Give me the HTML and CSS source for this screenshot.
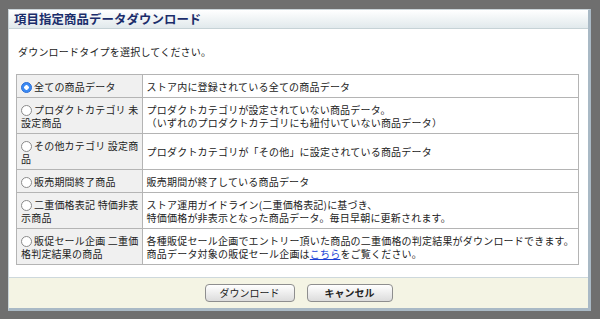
FILE: index.html
```html
<!DOCTYPE html>
<html lang="ja">
<head>
<meta charset="utf-8">
<title>項目指定商品データダウンロード</title>
<link rel="stylesheet" href="styles.css">
</head>
<body>
<div class="page">
  <div class="dialog">
    <div class="titlebar">項目指定商品データダウンロード</div>
    <div class="content">
      <p class="lead">ダウンロードタイプを選択してください。</p>
      <table class="types">
        <tr>
          <td class="opt"><span class="radio on"></span>全ての商品データ</td>
          <td class="desc">ストア内に登録されている全ての商品データ</td>
        </tr>
        <tr>
          <td class="opt"><span class="radio"></span>プロダクトカテゴリ 未<br>設定商品</td>
          <td class="desc">プロダクトカテゴリが設定されていない商品データ。<br>（いずれのプロダクトカテゴリにも紐付いていない商品データ）</td>
        </tr>
        <tr>
          <td class="opt"><span class="radio"></span>その他カテゴリ 設定商<br>品</td>
          <td class="desc">プロダクトカテゴリが「その他」に設定されている商品データ</td>
        </tr>
        <tr>
          <td class="opt"><span class="radio"></span>販売期間終了商品</td>
          <td class="desc">販売期間が終了している商品データ</td>
        </tr>
        <tr>
          <td class="opt"><span class="radio"></span>二重価格表記 特価非表<br>示商品</td>
          <td class="desc">ストア運用ガイドライン(二重価格表記)に基づき、<br>特価価格が非表示となった商品データ。毎日早朝に更新されます。</td>
        </tr>
        <tr>
          <td class="opt"><span class="radio"></span>販促セール企画 二重価<br>格判定結果の商品</td>
          <td class="desc">各種販促セール企画でエントリー頂いた商品の二重価格の判定結果がダウンロードできます。<br>商品データ対象の販促セール企画は<a href="#" class="link">こちら</a>をご覧ください。</td>
        </tr>
      </table>
    </div>
    <div class="footer">
      <button class="btn">ダウンロード</button>
      <button class="btn btn-bold">キャンセル</button>
    </div>
  </div>
</div>
</body>
</html>
```
FILE: styles.css
```css
html, body {
  margin: 0;
  padding: 0;
  background: #6f6f6f;
  height: 100%;
}
body {
  font-family: "Noto Sans CJK JP", "Noto Sans", sans-serif;
  color: #222;
}
.page {
  padding: 9px 0 0 8px;
}
.dialog {
  width: 583px;
  box-sizing: border-box;
  background: #fff;
  border-top: 1px solid #c9d3d8;
  border-left: 1px solid #c9d3d8;
  border-right: 3px solid #a9b9c5;
  border-bottom: 3px solid #a9b9c5;
}
.titlebar {
  height: 18px;
  line-height: 18px;
  padding-left: 5px;
  font-size: 12.4px;
  letter-spacing: 0.1px;
  font-weight: bold;
  color: #1b2d6b;
  background: linear-gradient(#ffffff, #e1e9ec);
  border-bottom: 1px solid #c6d2d6;
}
.content {
  padding: 16px 9px 12px 7px;
}
.lead {
  margin: 0 0 16px 2px;
  font-size: 10px;
  letter-spacing: 0.2px;
  line-height: 13px;
}
.types {
  width: 563px;
  border-collapse: collapse;
  border: 1px solid #a8a8a8;
  font-size: 10px;
  letter-spacing: 0.2px;
  line-height: 13px;
}
.types td {
  border: 1px solid #b4b4b4;
  padding: 4.5px 4px;
  vertical-align: middle;
}
.types td.opt {
  width: 119px;
  background: #f0f0f0;
  padding-left: 4px;
  padding-right: 2px;
  white-space: nowrap;
}
.types td.desc {
  padding-left: 4px;
  white-space: nowrap;
}
.radio {
  display: inline-block;
  box-sizing: border-box;
  width: 11px;
  height: 11px;
  border-radius: 50%;
  border: 1px solid #8a8a8a;
  background: #fff;
  vertical-align: -2px;
  margin-right: 2px;
}
.radio.on {
  border-color: #2d6fd8;
  background: radial-gradient(circle, #ffffff 0 2px, #3b8af3 2.5px);
}
.link {
  color: #1a3fd6;
  text-decoration: underline;
}
.footer {
  height: 30px;
  background: #f4f4e4;
  border-top: 1px solid #cdd8dc;
  display: flex;
  justify-content: center;
  align-items: center;
  gap: 12px;
}
.btn {
  font-family: "Noto Sans CJK JP", "Noto Sans", sans-serif;
  font-size: 10px;
  color: #222;
  height: 18px;
  width: 90px;
  padding: 0;
  line-height: 16px;
  border: 1px solid #8e8e8e;
  border-radius: 4px;
  background: linear-gradient(#ffffff, #dcdcdc);
}
.btn-bold {
  width: 86px;
  font-weight: bold;
}
```
